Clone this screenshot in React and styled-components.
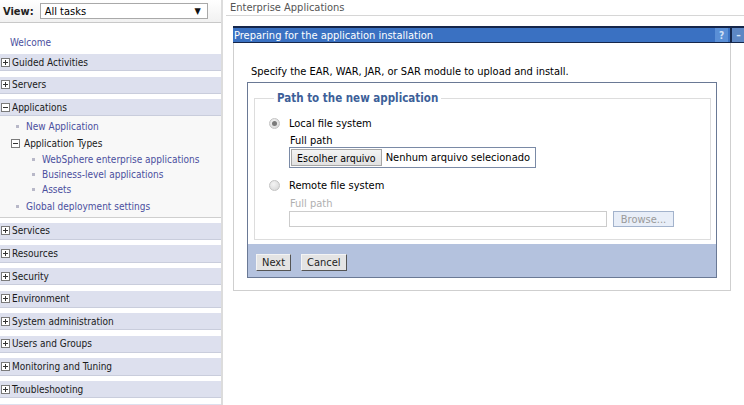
import React from 'react'
import styled, { createGlobalStyle } from 'styled-components'

const Global = createGlobalStyle`
  html, body { margin: 0; padding: 0; background: #fff; overflow: hidden; }
  body {
    font-family: "DejaVu Sans Condensed", "DejaVu Sans", sans-serif;
    font-size: 11px;
    color: #000;
  }
`

const Page = styled.div`
  display: flex;
  width: 744px;
  height: 405px;
  overflow: hidden;
`

/* ---------- sidebar ---------- */

const Sidebar = styled.div`
  width: 221px;
  flex-shrink: 0;
  border-right: 2px solid #dcdcdc;
  display: flex;
  flex-direction: column;
  font-size: 10px;
  & > * { flex-shrink: 0; }
`

const ViewBar = styled.div`
  height: 22px;
  display: flex;
  align-items: center;
  gap: 6px;
  padding-left: 3px;
  border-bottom: 1px solid #c8c8c8;
  background: linear-gradient(#ffffff, #f1f1f1);
`

const ViewLabel = styled.span`
  font-weight: bold;
  font-size: 11px;
  color: #222;
`

const Select = styled.div`
  width: 168px;
  height: 16px;
  box-sizing: border-box;
  border: 1px solid #a9a9a9;
  background: #fff;
  display: flex;
  align-items: center;
  justify-content: space-between;
  padding: 0 6px 0 4px;
  font-size: 11px;
`

const Arrow = styled.span`
  font-size: 9px;
  color: #111;
`

const Welcome = styled.div`
  height: 31px;
  padding: 14px 0 0 10px;
  box-sizing: border-box;
  color: #4b4f9e;
`

const Band = styled.div`
  height: 17.3px;
  box-sizing: border-box;
  margin-bottom: 5.3px;
  background: #dde0ee;
  border-bottom: 1px solid #c9cddc;
  display: flex;
  align-items: center;
  gap: 2px;
  padding-left: 1px;
  color: #1a1a1a;
  &:last-child { margin-bottom: 0; }
`

const Toggle = styled.span`
  width: 9px;
  height: 9px;
  box-sizing: border-box;
  border: 1px solid #7a7a7a;
  background: #fff;
  position: relative;
  flex-shrink: 0;
  &::before {
    content: '';
    position: absolute;
    left: 1px; right: 1px; top: 3px;
    height: 1px;
    background: #333;
  }
  &::after {
    content: '';
    display: ${p => (p.open ? 'none' : 'block')};
    position: absolute;
    top: 1px; bottom: 1px; left: 3px;
    width: 1px;
    background: #333;
  }
`

const Expanded = styled.div`
  height: 101.3px;
  box-sizing: border-box;
  margin: -5.3px 0 5px;
  padding-top: 2px;
  background: #f8f8f8;
  border-bottom: 1px solid #cfcfcf;
`

const Item = styled.div`
  height: ${p => p.h}px;
  display: flex;
  align-items: center;
  padding-left: ${p => p.indent}px;
  color: ${p => (p.link ? '#4b4f9e' : '#1a1a1a')};
  gap: ${p => (p.link ? 7 : 4)}px;
`

const Bullet = styled.span`
  width: 3px;
  height: 3px;
  background: #b8b8c8;
  flex-shrink: 0;
`

/* ---------- content ---------- */

const Main = styled.div`
  flex: 1;
  padding-left: 5px;
  display: flex;
  flex-direction: column;
  min-width: 0;
`

const Crumb = styled.div`
  height: 16px;
  box-sizing: border-box;
  border-bottom: 1px solid #d6d6d6;
  padding: 1px 0 0 4px;
  color: #555;
  margin-left: -2px;
`

const Panel = styled.div`
  margin: 10px 0 0 5px;
  width: 498px;
`

const TitleBar = styled.div`
  width: 512px;
  height: 17px;
  box-sizing: border-box;
  background: #3a71c2;
  border-top: 2px solid #15264a;
  border-bottom: 1px solid #15264a;
  display: flex;
  align-items: center;
  color: #fff;
  padding-left: 1px;
`

const TitleText = styled.span`
  flex: 1;
`

const TitleBtn = styled.span`
  width: 13px;
  height: 14px;
  display: flex;
  align-items: center;
  justify-content: center;
  background: ${p => (p.dark ? '#5d87c4' : '#5a8fd6')};
  color: #d3e1f5;
  font-weight: bold;
  font-size: 10px;
  border-left: ${p => (p.dark ? '2px solid #15264a' : 'none')};
  margin-right: ${p => (p.dark ? 0 : 2)}px;
`

const Body = styled.div`
  border: 1px solid #cfcfcf;
  border-top: none;
  padding: 22px 13px 12px 13px;
`

const Intro = styled.div`
  padding-left: 4px;
  line-height: 13px;
  margin-bottom: 4px;
`

const Form = styled.div`
  border: 1px solid #6a7995;
  padding: 8px 5px 0 6px;
  background: #fff;
`

const Fieldset = styled.fieldset`
  margin: 0;
  border: 1px solid #dddddd;
  padding: 10px 0 12px 14px;
`

const Legend = styled.legend`
  font-weight: bold;
  font-size: 11.5px;
  color: #3d5f99;
  padding: 0 3px;
  margin-left: 5px;
`

const Choice = styled.div`
  display: flex;
  align-items: center;
  gap: 9px;
  height: 16px;
  margin-top: ${p => p.top}px;
`

const Radio = styled.span`
  width: 11px;
  height: 11px;
  border-radius: 50%;
  box-sizing: border-box;
  border: 1px solid #c3c3c3;
  background: radial-gradient(circle at 40% 35%, #f4f4f4, #d4d4d4);
  display: flex;
  align-items: center;
  justify-content: center;
  &::after {
    content: '';
    display: ${p => (p.checked ? 'block' : 'none')};
    width: 5px;
    height: 5px;
    border-radius: 50%;
    background: #7a7a7a;
  }
`

const Sub = styled.div`
  padding-left: 20px;
`

const FieldLabel = styled.div`
  margin: ${p => (p.disabled ? 4 : 3)}px 0 0 1px;
  color: ${p => (p.disabled ? '#b0b0b0' : '#000')};
`

const FileBox = styled.div`
  width: 247px;
  height: 21px;
  box-sizing: border-box;
  border: 1px solid #7a8aa6;
  display: flex;
  align-items: center;
  gap: 4px;
  padding-left: 1px;
  white-space: nowrap;
  overflow: hidden;
`

const FileBtn = styled.span`
  height: 17px;
  box-sizing: border-box;
  border: 1px solid #a6a6a6;
  background: linear-gradient(#f3f3f3, #e1e1e1);
  padding: 0 5px;
  display: flex;
  align-items: center;
  font-size: 10.5px;
`

const PathRow = styled.div`
  display: flex;
  gap: 6px;
  align-items: center;
  margin-top: 1px;
`

const TextBox = styled.div`
  width: 318px;
  height: 16px;
  box-sizing: border-box;
  border: 1px solid #cccccc;
  background: #fff;
`

const Browse = styled.div`
  width: 61px;
  height: 16px;
  box-sizing: border-box;
  border: 1px solid #a3b3cc;
  background: #e8eef8;
  color: #9a9a9a;
  display: flex;
  align-items: center;
  justify-content: center;
`

const ButtonBar = styled.div`
  margin: 4px -5px 0 -6px;
  height: 33px;
  box-sizing: border-box;
  background: #b4c2de;
  display: flex;
  align-items: flex-end;
  gap: 10px;
  padding: 0 0 6px 8px;
`

const Button = styled.button`
  font-family: inherit;
  font-size: 11px;
  height: 17px;
  padding: 0 5px;
  margin: 0;
  background: #e4e4e4;
  color: #222;
  border: 1px solid;
  border-color: #f4f4f4 #555 #555 #f4f4f4;
  display: flex;
  align-items: center;
`

const categories = ['Services', 'Resources', 'Security', 'Environment', 'System administration',
  'Users and Groups', 'Monitoring and Tuning', 'Troubleshooting']

export default function App() {
  return (
    <Page>
      <Global />
      <Sidebar>
        <ViewBar>
          <ViewLabel>View:</ViewLabel>
          <Select>All tasks<Arrow>▼</Arrow></Select>
        </ViewBar>
        <Welcome>Welcome</Welcome>
        <Band><Toggle />Guided Activities</Band>
        <Band><Toggle />Servers</Band>
        <Band><Toggle open />Applications</Band>
        <Expanded>
          <Item h={16} indent={16} link><Bullet />New Application</Item>
          <Item h={18} indent={11}><Toggle open />Application Types</Item>
          <Item h={14} indent={32} link><Bullet />WebSphere enterprise applications</Item>
          <Item h={16} indent={32} link><Bullet />Business-level applications</Item>
          <Item h={14} indent={32} link><Bullet />Assets</Item>
          <Item h={21} indent={16} link><Bullet />Global deployment settings</Item>
        </Expanded>
        {categories.map(c => <Band key={c}><Toggle />{c}</Band>)}
        <Band />
      </Sidebar>
      <Main>
        <Crumb>Enterprise Applications</Crumb>
        <Panel>
          <TitleBar>
            <TitleText>Preparing for the application installation</TitleText>
            <TitleBtn>?</TitleBtn>
            <TitleBtn dark>–</TitleBtn>
          </TitleBar>
          <Body>
            <Intro>Specify the EAR, WAR, JAR, or SAR module to upload and install.</Intro>
            <Form>
              <Fieldset>
                <Legend>Path to the new application</Legend>
                <Choice top={0}><Radio checked />Local file system</Choice>
                <Sub>
                  <FieldLabel>Full path</FieldLabel>
                  <FileBox>
                    <FileBtn>Escolher arquivo</FileBtn>
                    Nenhum arquivo selecionado
                  </FileBox>
                </Sub>
                <Choice top={9}><Radio />Remote file system</Choice>
                <Sub>
                  <FieldLabel disabled>Full path</FieldLabel>
                  <PathRow>
                    <TextBox />
                    <Browse>Browse...</Browse>
                  </PathRow>
                </Sub>
              </Fieldset>
              <ButtonBar>
                <Button>Next</Button>
                <Button>Cancel</Button>
              </ButtonBar>
            </Form>
          </Body>
        </Panel>
      </Main>
    </Page>
  )
}
